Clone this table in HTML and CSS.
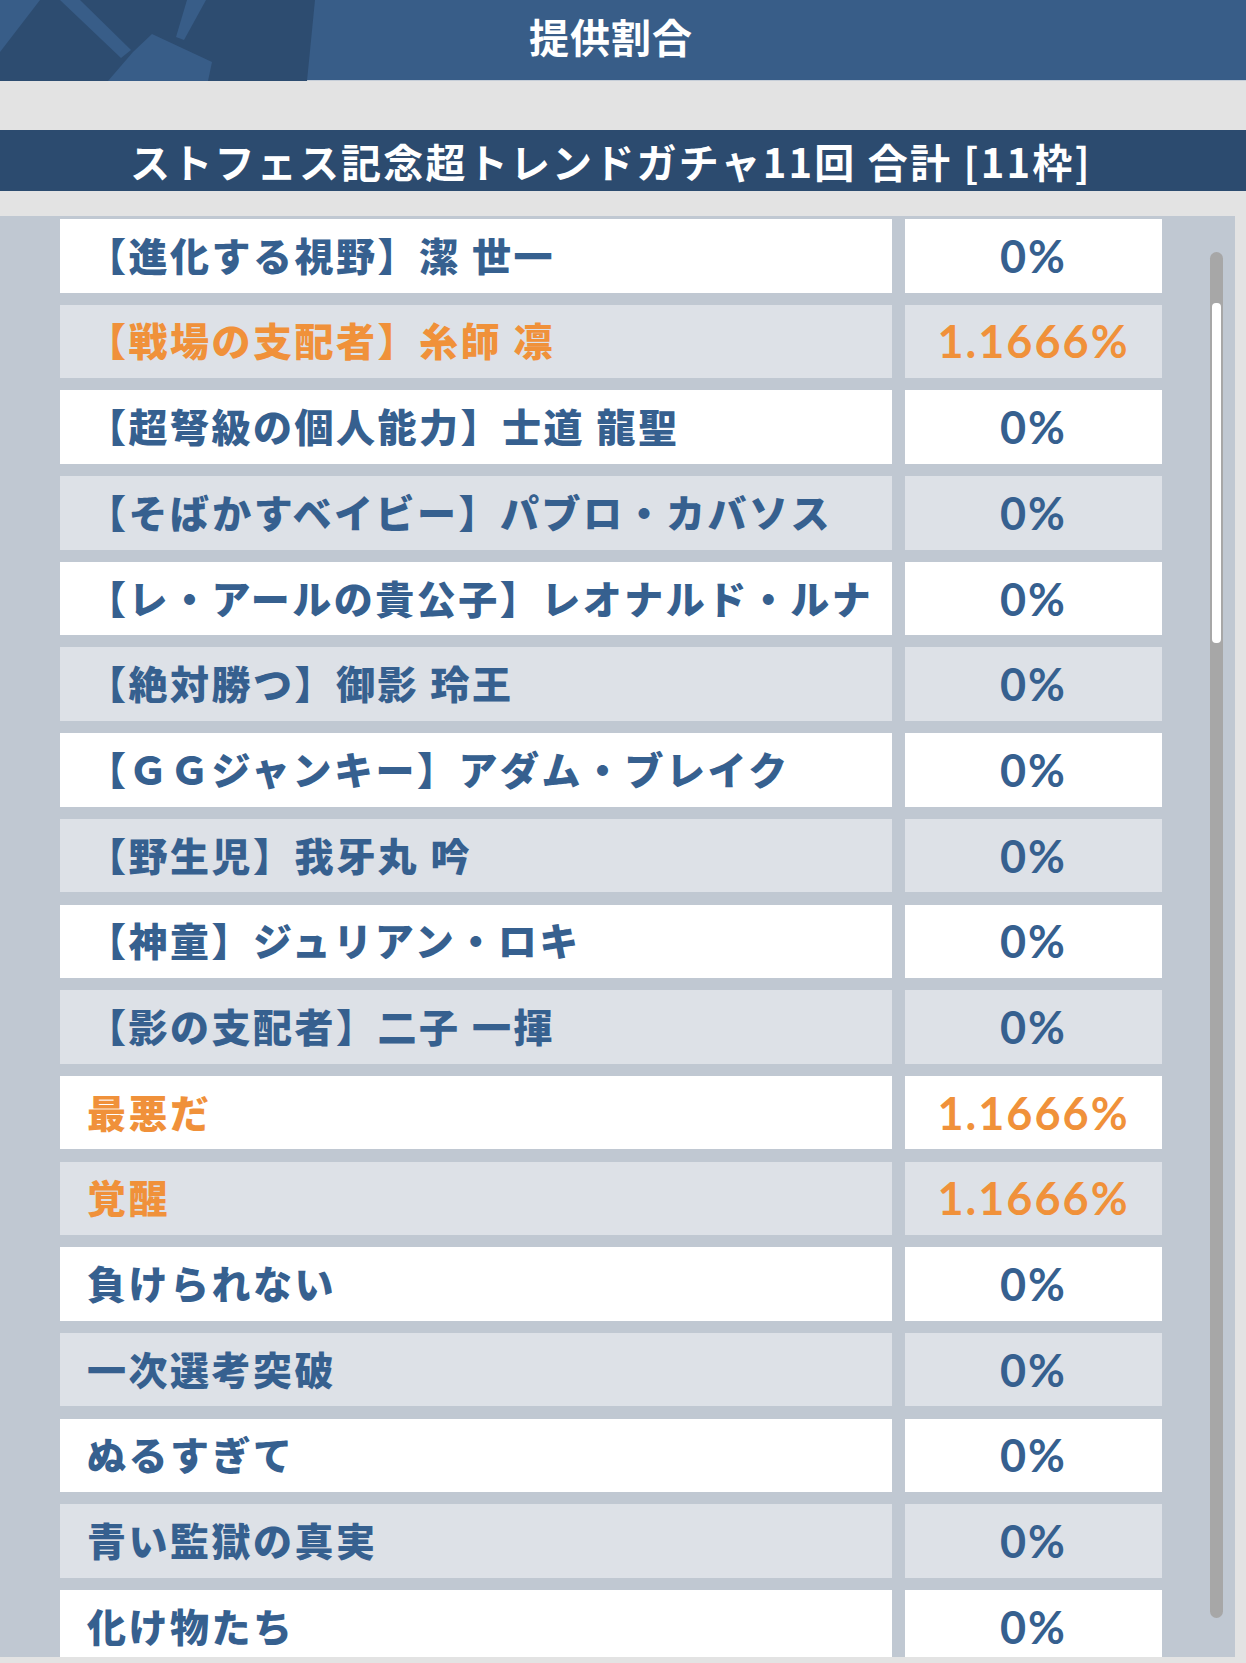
FILE: index.html
```html
<!DOCTYPE html>
<html lang="ja">
  <head>
    <meta charset="UTF-8" />
    <meta name="viewport" content="width=device-width, initial-scale=1.0" />
    <title>提供割合</title>
    <link rel="stylesheet" href="styles.css">
  </head>
  <body>
    <header class="topBar">
      <svg class="deco" width="320" height="81" viewBox="0 0 320 81">
        <polygon points="0,0 315,0 307,81 0,81" fill="#2d4c70" />
        <polygon points="0,0 40,0 0,52" fill="#385d88" />
        <polygon points="60,0 80,0 131,50 121,58" fill="#385d88" />
        <polygon points="108,81 133,52 152,34 212,62 208,81" fill="#385d88" />
        <polygon points="187,0 206,0 184,40 176,37" fill="#385d88" />
      </svg>
      <h1>提供割合</h1>
    </header>

    <h2 class="gachaTitle">ストフェス記念超トレンドガチャ11回 合計 [11枠]</h2>

    <div class="panel">
      <div class="rateList">
        <div class="row">
          <div class="name">【進化する視野】潔 世一</div>
          <div class="rate">0%</div>
        </div>
        <div class="row hit">
          <div class="name">【戦場の支配者】糸師 凛</div>
          <div class="rate">1.1666%</div>
        </div>
        <div class="row">
          <div class="name">【超弩級の個人能力】士道 龍聖</div>
          <div class="rate">0%</div>
        </div>
        <div class="row">
          <div class="name">【そばかすベイビー】パブロ・カバソス</div>
          <div class="rate">0%</div>
        </div>
        <div class="row">
          <div class="name">【レ・アールの貴公子】レオナルド・ルナ</div>
          <div class="rate">0%</div>
        </div>
        <div class="row">
          <div class="name">【絶対勝つ】御影 玲王</div>
          <div class="rate">0%</div>
        </div>
        <div class="row">
          <div class="name">【ＧＧジャンキー】アダム・ブレイク</div>
          <div class="rate">0%</div>
        </div>
        <div class="row">
          <div class="name">【野生児】我牙丸 吟</div>
          <div class="rate">0%</div>
        </div>
        <div class="row">
          <div class="name">【神童】ジュリアン・ロキ</div>
          <div class="rate">0%</div>
        </div>
        <div class="row">
          <div class="name">【影の支配者】二子 一揮</div>
          <div class="rate">0%</div>
        </div>
        <div class="row hit">
          <div class="name">最悪だ</div>
          <div class="rate">1.1666%</div>
        </div>
        <div class="row hit">
          <div class="name">覚醒</div>
          <div class="rate">1.1666%</div>
        </div>
        <div class="row">
          <div class="name">負けられない</div>
          <div class="rate">0%</div>
        </div>
        <div class="row">
          <div class="name">一次選考突破</div>
          <div class="rate">0%</div>
        </div>
        <div class="row">
          <div class="name">ぬるすぎて</div>
          <div class="rate">0%</div>
        </div>
        <div class="row">
          <div class="name">青い監獄の真実</div>
          <div class="rate">0%</div>
        </div>
        <div class="row">
          <div class="name">化け物たち</div>
          <div class="rate">0%</div>
        </div>
      </div>
      <div class="scrollTrack">
        <div class="scrollThumb"></div>
      </div>
    </div>
  </body>
</html>
```

FILE: styles.css
```css
body {
  margin: 0;
  width: 1246px;
  height: 1663px;
  overflow: hidden;
  background-color: #e3e3e3;
  font-family: "Noto Sans CJK JP", "Noto Sans", sans-serif;
}

.topBar {
  position: relative;
  height: 80px;
  background-color: #385d88;
  border-bottom: 1px solid #c6ced8;
  display: flex;
  align-items: center;
  justify-content: center;
  padding-right: 24px;
}
.deco {
  position: absolute;
  left: 0;
  top: 0;
}
.topBar h1 {
  position: relative;
  margin: 0 0 8px 0;
  color: white;
  font-size: 40px;
  font-weight: 700;
  line-height: 1;
  letter-spacing: 1px;
}

.gachaTitle {
  margin: 49px 0 0 0;
  height: 61px;
  background-color: #2c4b6f;
  color: white;
  font-size: 40px;
  font-weight: 700;
  letter-spacing: 2.2px;
  display: flex;
  align-items: center;
  justify-content: center;
  padding-right: 24px;
}

.panel {
  position: relative;
  margin-top: 25px;
  width: 1235px;
  height: 1441px;
  padding: 3px 0 0 60px;
  box-sizing: border-box;
  background-color: #c0c8d2;
  overflow: hidden;
}

.rateList {
  display: flex;
  flex-direction: column;
  gap: 12.2px;
}
.row {
  display: grid;
  grid-template-columns: 832px 257px;
  gap: 13px;
  height: 73.5px;
}
.row .name,
.row .rate {
  background-color: white;
  display: flex;
  align-items: center;
  color: #36608f;
}
.row:nth-child(even) .name,
.row:nth-child(even) .rate {
  background-color: #dde1e7;
}
.name {
  padding: 0 0 4px 27px;
  font-size: 39px;
  font-weight: 900;
  letter-spacing: 2.5px;
  white-space: nowrap;
}
.rate {
  justify-content: center;
  font-family: Lato, "Noto Sans", sans-serif;
  font-size: 45px;
  font-weight: 700;
  letter-spacing: 2px;
}
.row.hit .name,
.row.hit .rate {
  color: #f0913a;
}

.scrollTrack {
  position: absolute;
  left: 1210px;
  top: 36px;
  width: 13px;
  height: 1366px;
  border-radius: 7px;
  background-color: #a7a7a7;
}
.scrollThumb {
  margin: 51px 0 0 2px;
  width: 9px;
  height: 340px;
  border-radius: 4px;
  background-color: white;
}
```
